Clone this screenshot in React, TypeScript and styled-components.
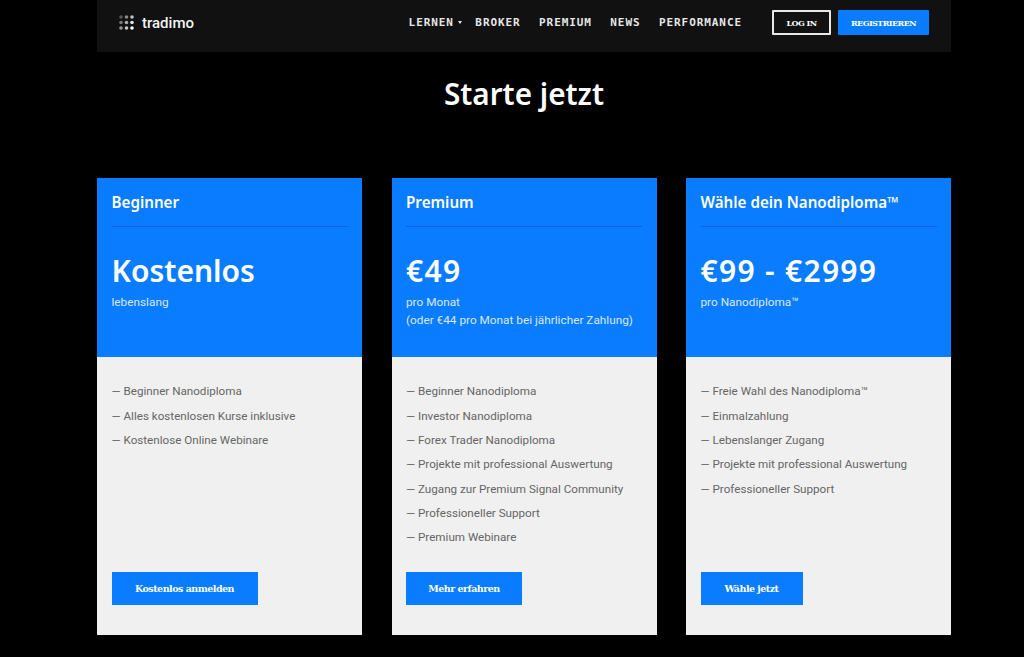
import styled, { createGlobalStyle } from 'styled-components';

const GlobalStyle = createGlobalStyle`
  html, body {
    margin: 0;
    padding: 0;
    background: #000;
  }
  body {
    font-family: "Noto Sans", "Open Sans", sans-serif;
  }
`;

const Page = styled.div`
  width: 854px;
  height: 657px;
  margin-left: 97px;
  display: flex;
  flex-direction: column;
`;

const Header = styled.header`
  height: 52px;
  box-sizing: border-box;
  background: #111;
  display: flex;
  align-items: center;
  padding: 0 22px 7px;
`;

const Logo = styled.div`
  display: flex;
  align-items: center;
  gap: 8px;
  color: #f4f4f4;
  font-family: Roboto, sans-serif;
  font-size: 15px;
  font-weight: 500;
`;

const Nav = styled.nav`
  margin-left: auto;
  display: flex;
  align-items: center;
  gap: 18.4px;
`;

const NavLink = styled.a`
  display: flex;
  align-items: center;
  color: #e6e6e6;
  font-family: "DejaVu Sans Mono", monospace;
  font-size: 11px;
  font-weight: 700;
  letter-spacing: 0.93px;
  text-decoration: none;
`;

const Caret = styled.span`
  width: 0;
  height: 0;
  margin: 0 -5px 0 4px;
  border-left: 2px solid transparent;
  border-right: 2px solid transparent;
  border-top: 3px solid #e6e6e6;
`;

const Actions = styled.div`
  display: flex;
  gap: 7px;
  margin-left: 30px;
`;

const HeaderButton = styled.a<{ $filled?: boolean }>`
  display: flex;
  align-items: center;
  justify-content: center;
  box-sizing: border-box;
  height: 25px;
  width: ${(p) => (p.$filled ? '91px' : '59px')};
  background: ${(p) => (p.$filled ? '#0a7cff' : 'transparent')};
  border: ${(p) => (p.$filled ? 'none' : '2px solid #e8e8e8')};
  border-radius: 1px;
  color: #fff;
  font-family: "DejaVu Serif", serif;
  font-size: 8px;
  font-weight: 700;
  letter-spacing: -0.55px;
`;

const Title = styled.h1`
  margin: 21px 0 0;
  height: 105px;
  color: #fff;
  font-size: 29.7px;
  line-height: 42px;
  font-weight: 600;
  text-align: center;
`;

const Cards = styled.div`
  display: grid;
  grid-template-columns: repeat(3, 265px);
  justify-content: space-between;
`;

const Card = styled.section`
  height: 457px;
  display: flex;
  flex-direction: column;
  background: #f0f0f0;
`;

const CardHead = styled.div`
  height: 179px;
  box-sizing: border-box;
  padding: 13px 14.5px 0;
  background: #0a7cff;
  color: #fff;
`;

const PlanName = styled.h2`
  margin: 0;
  height: 35px;
  border-bottom: 1px solid #0f62d8;
  font-size: 15.2px;
  line-height: 22px;
  font-weight: 600;
`;

const Price = styled.div<{ $numeric?: boolean }>`
  margin-top: 24px;
  font-size: 30px;
  line-height: 40px;
  font-weight: 600;
  letter-spacing: ${(p) => (p.$numeric ? '1.3px' : '0')};
`;

const Note = styled.p`
  margin: 2px 0 0;
  color: #d6e8ff;
  font-family: Roboto, sans-serif;
  font-size: 11.8px;
  line-height: 18px;
  white-space: nowrap;
`;

const CardBody = styled.div`
  flex: 1;
  display: flex;
  flex-direction: column;
  padding: 22.4px 14.5px 30px;
`;

const Features = styled.ul`
  flex: 1;
  margin: 0;
  padding: 0;
  list-style: none;
`;

const Feature = styled.li`
  height: 24.3px;
  color: #666;
  font-family: Roboto, sans-serif;
  font-size: 11.65px;
  line-height: 24.3px;
  white-space: nowrap;
`;

const CardButton = styled.a<{ $width: number }>`
  display: flex;
  align-items: center;
  justify-content: center;
  width: ${(p) => p.$width}px;
  height: 33px;
  background: #0a7cff;
  color: #fff;
  font-family: "DejaVu Serif", serif;
  font-size: 9.5px;
  font-weight: 700;
  letter-spacing: -0.5px;
`;

const LogoMark = () => (
  <svg width="15" height="15" viewBox="0 0 15 15" aria-hidden="true">
    {[0, 1, 2].map((row) =>
      [0, 1, 2].map((col) => (
        <circle
          key={`${row}-${col}`}
          cx={2 + col * 5.5}
          cy={2 + row * 5.5}
          r="1.8"
          fill="#fff"
          opacity={0.3 + col * 0.22 + row * 0.13}
        />
      ))
    )}
  </svg>
);

const plans = [
  {
    name: 'Beginner',
    price: 'Kostenlos',
    numeric: false,
    notes: ['lebenslang'],
    features: ['Beginner Nanodiploma', 'Alles kostenlosen Kurse inklusive', 'Kostenlose Online Webinare'],
    button: 'Kostenlos anmelden',
    buttonWidth: 146,
  },
  {
    name: 'Premium',
    price: '€49',
    numeric: true,
    notes: ['pro Monat', '(oder €44 pro Monat bei jährlicher Zahlung)'],
    features: [
      'Beginner Nanodiploma',
      'Investor Nanodiploma',
      'Forex Trader Nanodiploma',
      'Projekte mit professional Auswertung',
      'Zugang zur Premium Signal Community',
      'Professioneller Support',
      'Premium Webinare',
    ],
    button: 'Mehr erfahren',
    buttonWidth: 116,
  },
  {
    name: 'Wähle dein Nanodiploma™',
    price: '€99 - €2999',
    numeric: true,
    notes: ['pro Nanodiploma™'],
    features: [
      'Freie Wahl des Nanodiploma™',
      'Einmalzahlung',
      'Lebenslanger Zugang',
      'Projekte mit professional Auswertung',
      'Professioneller Support',
    ],
    button: 'Wähle jetzt',
    buttonWidth: 102,
  },
];

export default function App() {
  return (
    <>
      <GlobalStyle />
      <Page>
        <Header>
          <Logo>
            <LogoMark />
            tradimo
          </Logo>
          <Nav>
            <NavLink>
              LERNEN
              <Caret />
            </NavLink>
            <NavLink>BROKER</NavLink>
            <NavLink>PREMIUM</NavLink>
            <NavLink>NEWS</NavLink>
            <NavLink>PERFORMANCE</NavLink>
          </Nav>
          <Actions>
            <HeaderButton>LOG IN</HeaderButton>
            <HeaderButton $filled>REGISTRIEREN</HeaderButton>
          </Actions>
        </Header>
        <Title>Starte jetzt</Title>
        <Cards>
          {plans.map((plan) => (
            <Card key={plan.name}>
              <CardHead>
                <PlanName>{plan.name}</PlanName>
                <Price $numeric={plan.numeric}>{plan.price}</Price>
                <Note>
                  {plan.notes.map((note) => (
                    <span key={note}>
                      {note}
                      <br />
                    </span>
                  ))}
                </Note>
              </CardHead>
              <CardBody>
                <Features>
                  {plan.features.map((feature) => (
                    <Feature key={feature}>— {feature}</Feature>
                  ))}
                </Features>
                <CardButton $width={plan.buttonWidth}>{plan.button}</CardButton>
              </CardBody>
            </Card>
          ))}
        </Cards>
      </Page>
    </>
  );
}
